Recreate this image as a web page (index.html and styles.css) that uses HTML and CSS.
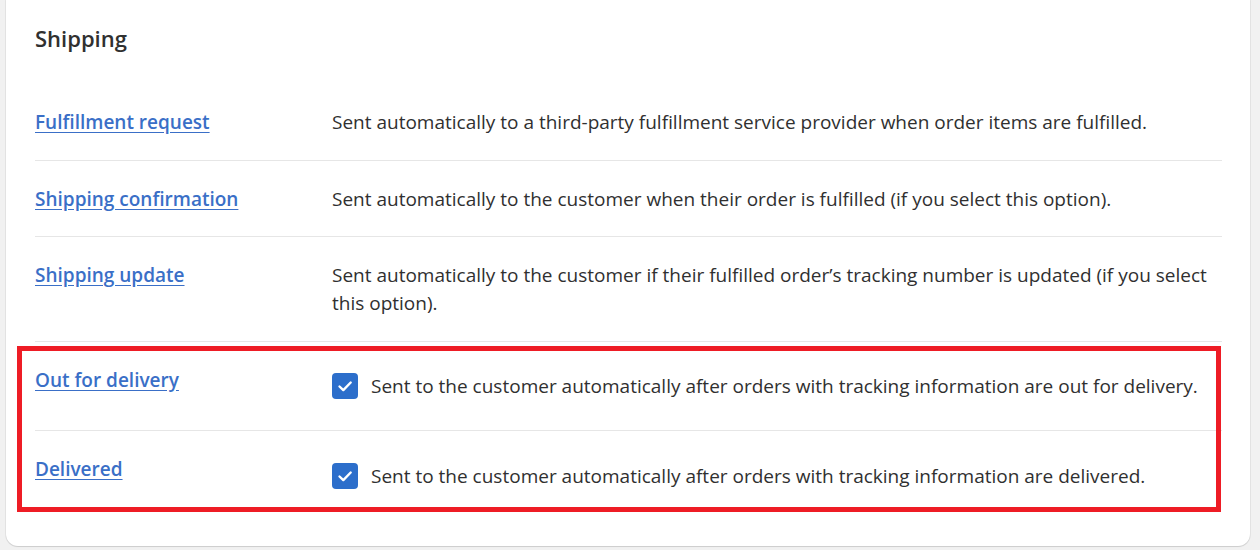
FILE: index.html
```html
<!DOCTYPE html>
<html lang="en">
<head>
<meta charset="utf-8">
<title>Shipping notifications</title>
<link rel="stylesheet" href="styles.css">
</head>
<body>
<div class="page">
  <section class="card">
    <h2 class="card-title">Shipping</h2>
    <div class="rows">
      <div class="row">
        <a class="row-link" href="#">Fulfillment request</a>
        <p class="row-desc">Sent automatically to a third-party fulfillment service provider when order items are fulfilled.</p>
      </div>
      <div class="row">
        <a class="row-link" href="#">Shipping confirmation</a>
        <p class="row-desc">Sent automatically to the customer when their order is fulfilled (if you select this option).</p>
      </div>
      <div class="row">
        <a class="row-link" href="#">Shipping update</a>
        <p class="row-desc">Sent automatically to the customer if their fulfilled order’s tracking number is updated (if you select this option).</p>
      </div>
      <div class="highlight">
        <div class="row">
          <a class="row-link" href="#">Out for delivery</a>
          <label class="row-check">
            <span class="checkbox"><svg viewBox="0 0 26 26" width="26" height="26"><path d="M7.5 13.5l3.8 3.6 7.4-7.6" fill="none" stroke="#fff" stroke-width="2.4" stroke-linecap="round" stroke-linejoin="round"/></svg></span>
            <span class="check-text">Sent to the customer automatically after orders with tracking information are out for delivery.</span>
          </label>
        </div>
        <div class="row">
          <a class="row-link" href="#">Delivered</a>
          <label class="row-check">
            <span class="checkbox"><svg viewBox="0 0 26 26" width="26" height="26"><path d="M7.5 13.5l3.8 3.6 7.4-7.6" fill="none" stroke="#fff" stroke-width="2.4" stroke-linecap="round" stroke-linejoin="round"/></svg></span>
            <span class="check-text">Sent to the customer automatically after orders with tracking information are delivered.</span>
          </label>
        </div>
      </div>
    </div>
  </section>
</div>
</body>
</html>
```

FILE: styles.css
```css
* { box-sizing: border-box; }
html, body { margin: 0; padding: 0; }
body {
  background: #f1f1f1;
  font-family: "Open Sans", "Noto Sans", sans-serif;
  color: #303030;
  width: 1260px;
  height: 550px;
  overflow: hidden;
}
.page {
  padding: 0 10px 0 6px;
}
.card {
  background: #fff;
  border-radius: 0 0 12px 12px;
  box-shadow: 0 1px 1px rgba(0,0,0,0.10), 0 0 0 1px rgba(0,0,0,0.05);
  padding: 24px 28px 26px 29px;
}
.card-title {
  margin: 0;
  font-size: 22px;
  line-height: 28px;
  font-weight: 600;
  color: #303030;
}
.rows {
  margin-top: 32px;
}
.row {
  display: flex;
  align-items: flex-start;
  padding: 24px 0 23.5px;
  border-top: 1px solid #e6e6e6;
}
.rows > .row:first-child { border-top: none; }
.row-link {
  flex: 0 0 297px;
  font-size: 19px;
  line-height: 28px;
  font-weight: 600;
  color: #3a6fc7;
  text-decoration: underline;
  text-underline-offset: 3px;
}
.row-desc {
  margin: 0;
  flex: 1;
  font-size: 19px;
  line-height: 28px;
}
.row-check {
  flex: 1;
  display: flex;
  align-items: center;
  gap: 13px;
  min-height: 41px;
  font-size: 19px;
  line-height: 28px;
}
.checkbox {
  flex: 0 0 26px;
  width: 26px;
  height: 26px;
  border-radius: 4px;
  background: #2c6ecb;
  display: flex;
}
.highlight {
  position: relative;
  border-top: 1px solid #e6e6e6;
}
.highlight > .row:first-child { border-top: none; }
.highlight::after {
  content: "";
  position: absolute;
  left: -18px;
  right: 1px;
  top: 4px;
  bottom: 8px;
  border: 5px solid #ee1c25;
  pointer-events: none;
}
```
